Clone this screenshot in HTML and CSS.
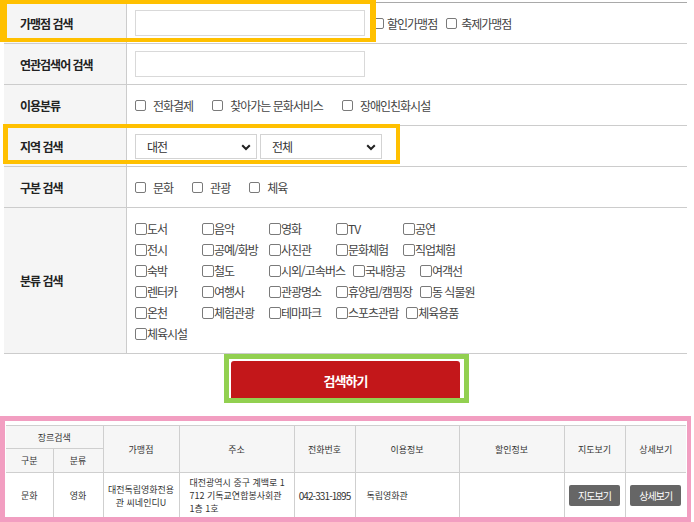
FILE: index.html
```html
<!DOCTYPE html>
<html lang="ko">
<head>
<meta charset="utf-8">
<title>가맹점 검색</title>
<link rel="stylesheet" href="styles.css">
</head>
<body>
<div class="page">
  <div class="form">
    <div class="row">
      <div class="th">가맹점 검색</div>
      <div class="td">
        <input class="text-input" type="text">
        <label class="opt-s first"><input type="checkbox" class="cb"><span>할인가맹점</span></label>
        <label class="opt-s"><input type="checkbox" class="cb"><span>축제가맹점</span></label>
      </div>
    </div>
    <div class="row">
      <div class="th">연관검색어 검색</div>
      <div class="td"><input class="text-input" type="text"></div>
    </div>
    <div class="row">
      <div class="th">이용분류</div>
      <div class="td">
        <label class="opt"><input type="checkbox" class="cb"><span>전화결제</span></label>
        <label class="opt"><input type="checkbox" class="cb"><span>찾아가는 문화서비스</span></label>
        <label class="opt"><input type="checkbox" class="cb"><span>장애인친화시설</span></label>
      </div>
    </div>
    <div class="row">
      <div class="th">지역 검색</div>
      <div class="td">
        <div class="sel">
          <select><option>대전</option></select>
          <svg class="chev" width="10" height="7" viewBox="0 0 10 7"><path d="M1.2 1.2 L5 5 L8.8 1.2" fill="none" stroke="#222" stroke-width="2"/></svg>
        </div>
        <div class="sel">
          <select><option>전체</option></select>
          <svg class="chev" width="10" height="7" viewBox="0 0 10 7"><path d="M1.2 1.2 L5 5 L8.8 1.2" fill="none" stroke="#222" stroke-width="2"/></svg>
        </div>
      </div>
    </div>
    <div class="row">
      <div class="th">구분 검색</div>
      <div class="td">
        <label class="opt"><input type="checkbox" class="cb"><span>문화</span></label>
        <label class="opt"><input type="checkbox" class="cb"><span>관광</span></label>
        <label class="opt"><input type="checkbox" class="cb"><span>체육</span></label>
      </div>
    </div>
    <div class="row tall">
      <div class="th">분류 검색</div>
      <div class="td cats">
        <div class="cat-row">
          <label class="cat"><input type="checkbox" class="cb2"><span>도서</span></label>
          <label class="cat"><input type="checkbox" class="cb2"><span>음악</span></label>
          <label class="cat"><input type="checkbox" class="cb2"><span>영화</span></label>
          <label class="cat"><input type="checkbox" class="cb2"><span>TV</span></label>
          <label class="cat"><input type="checkbox" class="cb2"><span>공연</span></label>
        </div>
        <div class="cat-row">
          <label class="cat"><input type="checkbox" class="cb2"><span>전시</span></label>
          <label class="cat"><input type="checkbox" class="cb2"><span>공예/화방</span></label>
          <label class="cat"><input type="checkbox" class="cb2"><span>사진관</span></label>
          <label class="cat"><input type="checkbox" class="cb2"><span>문화체험</span></label>
          <label class="cat"><input type="checkbox" class="cb2"><span>직업체험</span></label>
        </div>
        <div class="cat-row">
          <label class="cat"><input type="checkbox" class="cb2"><span>숙박</span></label>
          <label class="cat"><input type="checkbox" class="cb2"><span>철도</span></label>
          <label class="cat"><input type="checkbox" class="cb2"><span>시외/고속버스</span></label>
          <label class="cat"><input type="checkbox" class="cb2"><span>국내항공</span></label>
          <label class="cat"><input type="checkbox" class="cb2"><span>여객선</span></label>
        </div>
        <div class="cat-row">
          <label class="cat"><input type="checkbox" class="cb2"><span>렌터카</span></label>
          <label class="cat"><input type="checkbox" class="cb2"><span>여행사</span></label>
          <label class="cat"><input type="checkbox" class="cb2"><span>관광명소</span></label>
          <label class="cat"><input type="checkbox" class="cb2"><span>휴양림/캠핑장</span></label>
          <label class="cat"><input type="checkbox" class="cb2"><span>동 식물원</span></label>
        </div>
        <div class="cat-row">
          <label class="cat"><input type="checkbox" class="cb2"><span>온천</span></label>
          <label class="cat"><input type="checkbox" class="cb2"><span>체험관광</span></label>
          <label class="cat"><input type="checkbox" class="cb2"><span>테마파크</span></label>
          <label class="cat"><input type="checkbox" class="cb2"><span>스포츠관람</span></label>
          <label class="cat"><input type="checkbox" class="cb2"><span>체육용품</span></label>
        </div>
        <div class="cat-row">
          <label class="cat"><input type="checkbox" class="cb2"><span>체육시설</span></label>
        </div>
      </div>
    </div>
  </div>

  <div class="btn-wrap"><button class="btn-search" type="button">검색하기</button></div>

  <div class="results">
    <table>
      <colgroup>
        <col class="c1"><col class="c2"><col class="c3"><col class="c4"><col class="c5"><col class="c6"><col class="c7"><col class="c8"><col class="c9">
      </colgroup>
      <thead>
        <tr class="h1">
          <th colspan="2">장르검색</th>
          <th rowspan="2">가맹점</th>
          <th rowspan="2">주소</th>
          <th rowspan="2">전화번호</th>
          <th rowspan="2">이용정보</th>
          <th rowspan="2">할인정보</th>
          <th rowspan="2">지도보기</th>
          <th rowspan="2">상세보기</th>
        </tr>
        <tr class="h2">
          <th>구분</th>
          <th>분류</th>
        </tr>
      </thead>
      <tbody>
        <tr class="b1">
          <td>문화</td>
          <td>영화</td>
          <td>대전독립영화전용<br>관 씨네인디U</td>
          <td class="left addr">대전광역시 중구 계백로 1<br>712 기독교연합봉사회관<br>1층 1호</td>
          <td class="phone">042-331-1895</td>
          <td class="left">독립영화관</td>
          <td></td>
          <td><span class="tbtn">지도보기</span></td>
          <td><span class="tbtn">상세보기</span></td>
        </tr>
      </tbody>
    </table>
  </div>

  <div class="mark yellow m1"></div>
  <div class="mark yellow m2"></div>
  <div class="mark green"></div>
  <div class="mark pink"></div>
</div>
</body>
</html>
```
FILE: styles.css
```css
* { box-sizing: border-box; }
html, body { margin: 0; padding: 0; background: #fff; overflow: hidden; }
body {
  font-family: "Noto Sans CJK KR", "Noto Sans", sans-serif;
  color: #444;
}
.page {
  position: relative;
  width: 694px;
  height: 522px;
  overflow: hidden;
  padding: 2px 7px 0 4px;
}
.form {
  width: 683px;
  border-top: 1px solid #a9a9a9;
}
.row {
  display: grid;
  grid-template-columns: 123px 1fr;
  height: 41px;
  border-bottom: 1px solid #cccccc;
}
.row.tall { height: 146px; }
.th {
  background: #f5f5f5;
  border-right: 1px solid #cccccc;
  display: flex;
  align-items: center;
  padding-left: 16px;
  font-size: 12px;
  font-weight: 700;
  letter-spacing: -1px;
  color: #222;
}
.td {
  display: flex;
  align-items: center;
  padding-left: 8px;
  font-size: 12px;
  letter-spacing: -1px;
  color: #444;
}
.text-input {
  width: 230px;
  height: 26px;
  border: 1px solid #d9d9d9;
  background: #fff;
  margin: 0;
  padding: 0 6px;
}
.cb, .cb2 {
  -webkit-appearance: none;
  appearance: none;
  width: 11px;
  height: 11px;
  margin: 0;
  border: 1px solid #7a7a7a;
  border-radius: 2px;
  background: #fff;
  flex: none;
}
.cb2 { width: 12px; height: 12px; }
.opt {
  display: inline-flex;
  align-items: center;
  gap: 7px;
  margin-right: 19px;
}
.opt-s {
  display: inline-flex;
  align-items: center;
  gap: 3px;
  margin-left: 9px;
}
.opt-s.first { margin-left: 8px; }
.opt-s + .opt-s { gap: 4px; }
.sel {
  position: relative;
  width: 122px;
  height: 25px;
  margin-right: 3px;
}
.sel select {
  -webkit-appearance: none;
  appearance: none;
  width: 100%;
  height: 100%;
  border: 1px solid #d3d3d3;
  background: #fff;
  padding: 0 0 0 11px;
  font-family: inherit;
  font-size: 12px;
  letter-spacing: -1px;
  color: #333;
  border-radius: 0;
}
.chev {
  position: absolute;
  right: 6px;
  top: 10px;
  pointer-events: none;
}
.td.cats {
  display: block;
  padding-top: 10px;
}
.cat-row {
  display: flex;
  align-items: center;
  height: 21px;
}
.cat {
  display: inline-flex;
  align-items: center;
  min-width: 59px;
  margin-right: 8px;
}
.btn-wrap {
  display: flex;
  justify-content: center;
  width: 683px;
  padding-top: 7px;
}
.btn-search {
  width: 229px;
  height: 38px;
  border: none;
  border-radius: 3px 3px 1px 1px;
  background: #c3171a;
  color: #fff;
  font-family: inherit;
  font-size: 13px;
  font-weight: 700;
  letter-spacing: -1px;
  padding: 0;
}
.results {
  margin-top: 26px;
  margin-left: 2px;
  width: 680px;
}
table {
  width: 680px;
  table-layout: fixed;
  border-collapse: collapse;
  border-top: 1px solid #8f8f8f;
  font-size: 9px;
  letter-spacing: 0;
  color: #333;
}
col.c1 { width: 47px; }
col.c2 { width: 50px; }
col.c3 { width: 76px; }
col.c4 { width: 115px; }
col.c5 { width: 61px; }
col.c6 { width: 104px; }
col.c7 { width: 105px; }
col.c8 { width: 61px; }
col.c9 { width: 61px; }
th, td {
  border: 1px solid #cfcfcf;
  padding: 0;
  text-align: center;
  vertical-align: middle;
  font-weight: 400;
  line-height: 13px;
}
th { background: #f6f6f6; }
tr > :first-child { border-left: none; }
tr.h1 > th:last-child, tr.b1 > td:last-child { border-right: none; }
tr.h1 { height: 23px; }
tr.h2 { height: 24px; }
tr.b1 { height: 46px; }
td.left { text-align: left; padding-left: 11px; }
td.addr { padding-left: 10px; white-space: nowrap; }
td.phone { font-size: 10px; letter-spacing: -0.9px; white-space: nowrap; }
.tbtn {
  display: inline-block;
  height: 21px;
  line-height: 21px;
  padding: 0 9px;
  background: #666;
  color: #fff;
  border-radius: 2px;
  font-size: 10px;
  letter-spacing: -0.9px;
}
.mark {
  position: absolute;
  pointer-events: none;
}
.yellow { border: 4px solid #ffc000; }
.m1 { left: 0; top: 0; width: 376px; height: 42px; border-left-width: 7px; border-right-width: 6px; }
.m2 { left: 3px; top: 124px; width: 397px; height: 40px; border-left-width: 5px; }
.green { left: 224px; top: 354px; width: 245px; height: 49px; border: 5px solid #92d050; }
.pink { left: 0; top: 416px; width: 691px; height: 106px; border: 5px solid #f29ec1; border-right-width: 4px; }
```
